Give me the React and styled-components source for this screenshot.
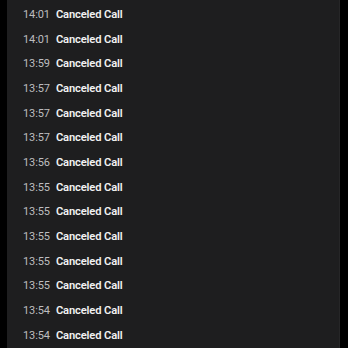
import React from 'react';
import styled, { createGlobalStyle } from 'styled-components';

const GlobalStyle = createGlobalStyle`
  html, body {
    margin: 0;
    padding: 0;
    background: #000;
    height: 100%;
    overflow: hidden;
  }
  body {
    font-family: Roboto, 'Liberation Sans', sans-serif;
  }
`;

const Page = styled.div`
  display: flex;
  height: 348px;
  padding-left: 7px;
`;

const Panel = styled.div`
  width: 333px;
  height: 100%;
  background: #1e1e1f;
  border-right: 1px solid #262627;
  padding: 2px 0 0 16px;
  box-sizing: border-box;
`;

const Row = styled.div`
  display: flex;
  align-items: center;
  height: 24.7px;
  font-size: 11px;
  -webkit-font-smoothing: antialiased;
`;

const Time = styled.span`
  color: #bdbdbf;
  font-weight: 400;
  margin-right: 6px;
  letter-spacing: -0.1px;
`;

const Label = styled.span`
  color: #f2f2f2;
  font-weight: 600;
  font-size: 11.2px;
  letter-spacing: -0.15px;
`;

const calls = [
  '14:01', '14:01', '13:59', '13:57', '13:57', '13:57', '13:56',
  '13:55', '13:55', '13:55', '13:55', '13:55', '13:54', '13:54',
];

export default function App() {
  return (
    <>
      <GlobalStyle />
      <Page>
        <Panel>
          {calls.map((t, i) => (
            <Row key={i}>
              <Time>{t}</Time>
              <Label>Canceled Call</Label>
            </Row>
          ))}
        </Panel>
      </Page>
    </>
  );
}
